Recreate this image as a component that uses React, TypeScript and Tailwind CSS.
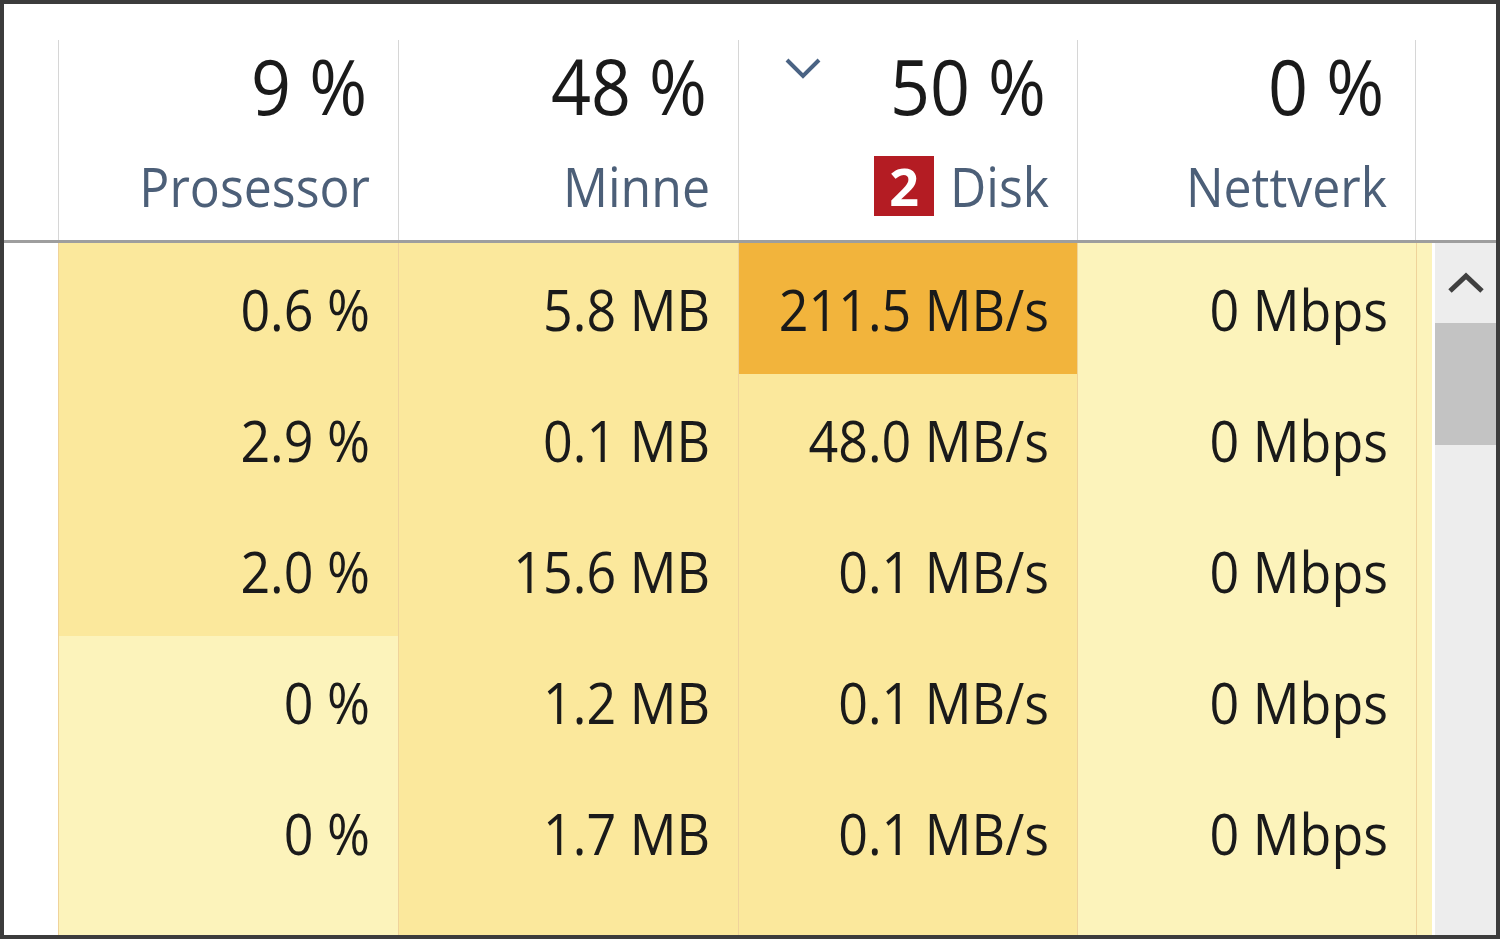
import React from 'react';

const DARK = 'bg-[#fbe89c]';
const LIGHT = 'bg-[#fcf3bb]';
const HOT = 'bg-[#f2b43c]';

const rows = [
  { cpu: '0.6 %', mem: '5.8 MB', disk: '211.5 MB/s', net: '0 Mbps', cpuBg: DARK, diskBg: HOT },
  { cpu: '2.9 %', mem: '0.1 MB', disk: '48.0 MB/s', net: '0 Mbps', cpuBg: DARK, diskBg: DARK },
  { cpu: '2.0 %', mem: '15.6 MB', disk: '0.1 MB/s', net: '0 Mbps', cpuBg: DARK, diskBg: DARK },
  { cpu: '0 %', mem: '1.2 MB', disk: '0.1 MB/s', net: '0 Mbps', cpuBg: LIGHT, diskBg: DARK },
  { cpu: '0 %', mem: '1.7 MB', disk: '0.1 MB/s', net: '0 Mbps', cpuBg: LIGHT, diskBg: DARK },
  { cpu: '', mem: '', disk: '', net: '', cpuBg: LIGHT, diskBg: DARK },
];

function Cell({ text, bg, width }: { text: string; bg: string; width: string }) {
  return (
    <div className={`${width} ${bg} h-full shrink-0 border-l border-[#efd39a] flex items-center justify-end pr-7`}>
      <span className="inline-block scale-y-110 text-[52px] leading-none text-[#1a1a1a]">{text}</span>
    </div>
  );
}

function HeaderCell({
  value,
  label,
  width,
  last,
  sorted,
  badge,
}: {
  value: string;
  label: string;
  width: string;
  last?: boolean;
  sorted?: boolean;
  badge?: string;
}) {
  return (
    <div className={`${width} shrink-0 h-full pt-[36px]`}>
      <div className={`h-full border-l border-[#d6d6d6] ${last ? 'border-r' : ''} flex flex-col pt-[10px] pr-7`}>
        <div className={`flex items-start ${sorted ? 'justify-between pl-[45px]' : 'justify-end'}`}>
          {sorted && (
            <svg width="38" height="24" viewBox="0 0 38 24" className="mt-[6px]">
              <path d="M3 4 L19 20 L35 4" fill="none" stroke="#4a6384" strokeWidth="4" />
            </svg>
          )}
          <span className="inline-block scale-y-110 text-[70px] leading-none text-[#1a1a1a] mr-[3px]">{value}</span>
        </div>
        <div className="flex items-center justify-end gap-4 mt-[41px] h-[50px]">
          {badge && (
            <span className="w-[60px] h-[60px] -my-[5px] shrink-0 bg-[#b41c23] text-white font-bold text-[52px] leading-none flex items-center justify-center">
              {badge}
            </span>
          )}
          <span className="inline-block scale-y-110 text-[50px] leading-none text-[#4c5f78]">{label}</span>
        </div>
      </div>
    </div>
  );
}

export default function App() {
  return (
    <div
      className="w-[1500px] h-[939px] border-4 border-[#3c3c3c] bg-white overflow-hidden flex flex-col"
      style={{ fontFamily: '"Open Sans", "Noto Sans", sans-serif' }}
    >
      {/* header */}
      <div className="h-[239px] shrink-0 flex border-b-[3px] border-[#9e9e9e]">
        <div className="w-[54px] shrink-0" />
        <HeaderCell value="9 %" label="Prosessor" width="w-[340px]" />
        <HeaderCell value="48 %" label="Minne" width="w-[340px]" />
        <HeaderCell value="50 %" label="Disk" width="w-[339px]" sorted badge="2" />
        <HeaderCell value="0 %" label="Nettverk" width="w-[339px]" last />
      </div>

      {/* body */}
      <div className="flex-1 flex overflow-hidden">
        <div className="w-[54px] shrink-0" />
        <div className="flex flex-col">
          {rows.map((r, i) => (
            <div key={i} className="h-[131px] shrink-0 flex">
              <Cell text={r.cpu} bg={r.cpuBg} width="w-[340px]" />
              <Cell text={r.mem} bg={DARK} width="w-[340px]" />
              <Cell text={r.disk} bg={r.diskBg} width="w-[339px]" />
              <Cell text={r.net} bg={LIGHT} width="w-[339px]" />
              <div className={`w-[16px] shrink-0 h-full border-l border-[#efd39a] ${LIGHT}`} />
            </div>
          ))}
        </div>
        <div className="w-[3px] shrink-0" />
        {/* scrollbar */}
        <div className="w-[61px] shrink-0 bg-[#ededed] flex flex-col">
          <div className="h-[80px] flex items-center justify-center">
            <svg width="38" height="22" viewBox="0 0 38 22">
              <path d="M3 19 L19 4 L35 19" fill="none" stroke="#404040" strokeWidth="5" />
            </svg>
          </div>
          <div className="h-[122px] bg-[#c3c3c3]" />
        </div>
      </div>
    </div>
  );
}
